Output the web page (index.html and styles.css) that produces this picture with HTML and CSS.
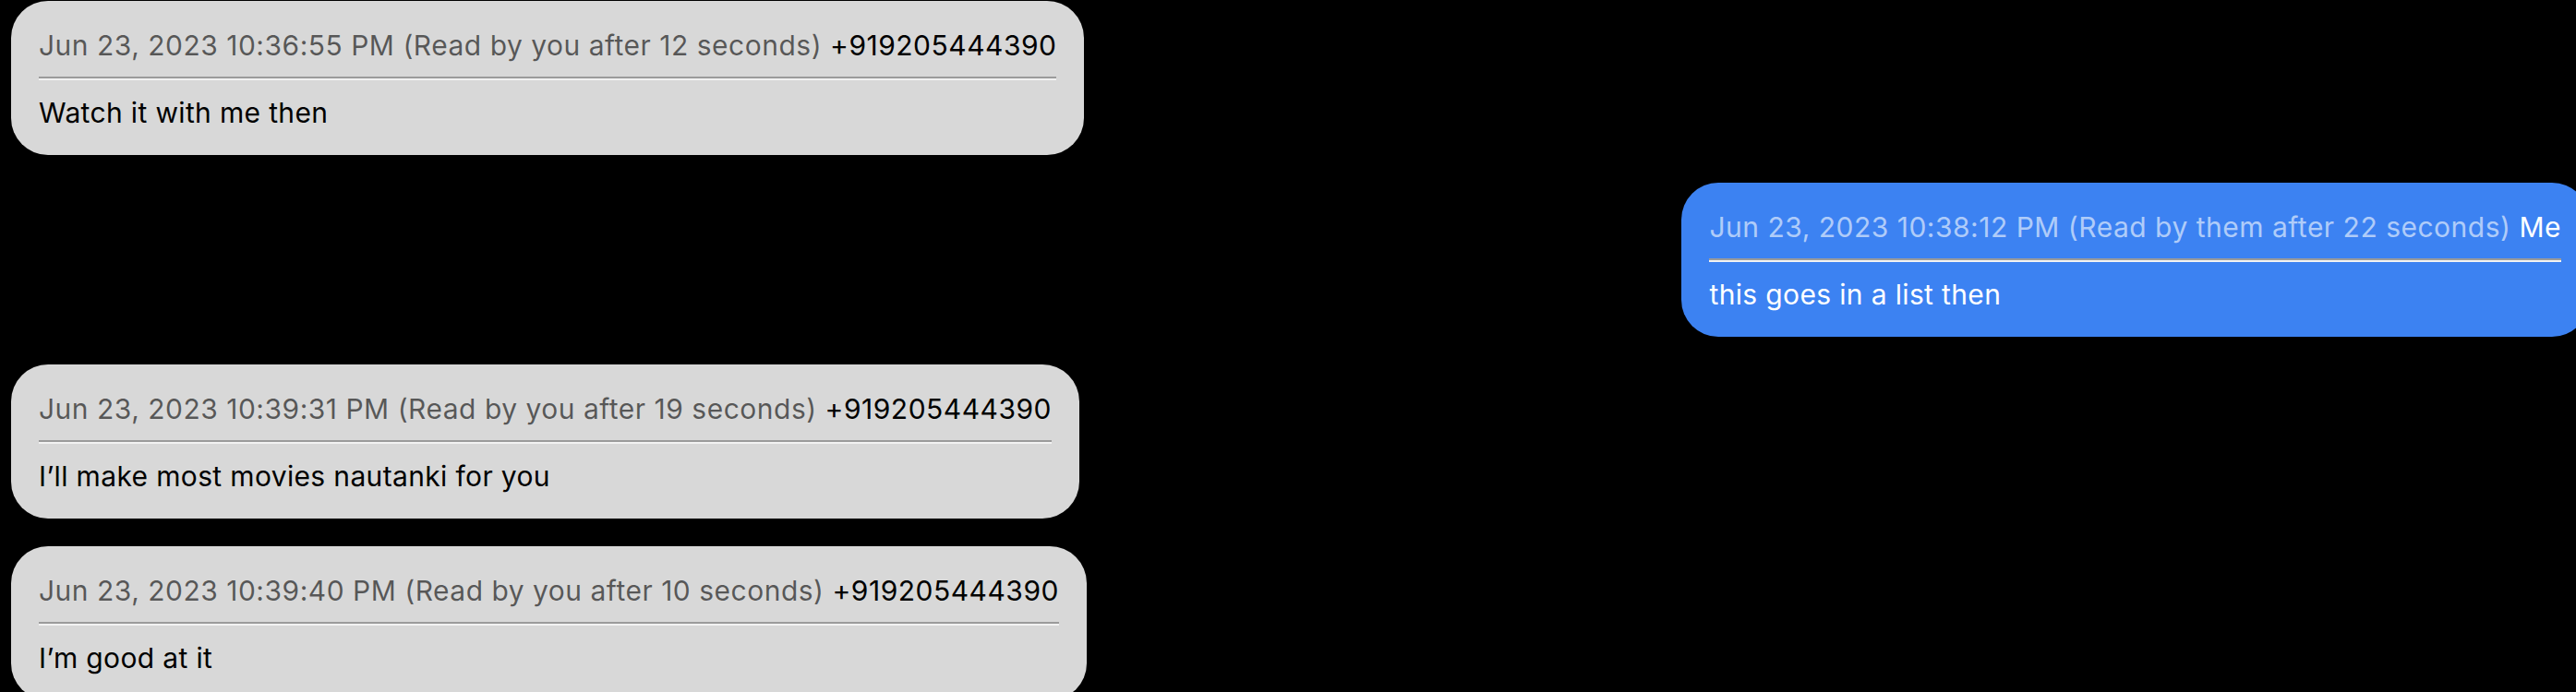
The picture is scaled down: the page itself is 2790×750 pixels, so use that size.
FILE: index.html
```html
<!DOCTYPE html>
<html lang="en">
<head>
<meta charset="utf-8">
<title>Messages</title>
<link rel="stylesheet" href="styles.css">
</head>
<body>
<main class="thread">
  <div class="msg received">
    <div class="meta"><span class="stamp">Jun 23, 2023 10:36:55 PM (Read by you after 12 seconds)</span> <span class="sender">+919205444390</span></div>
    <hr class="rule">
    <div class="text">Watch it with me then</div>
  </div>
  <div class="msg sent">
    <div class="meta"><span class="stamp">Jun 23, 2023 10:38:12 PM (Read by them after 22 seconds)</span> <span class="sender">Me</span></div>
    <hr class="rule">
    <div class="text">this goes in a list then</div>
  </div>
  <div class="msg received">
    <div class="meta"><span class="stamp">Jun 23, 2023 10:39:31 PM (Read by you after 19 seconds)</span> <span class="sender">+919205444390</span></div>
    <hr class="rule">
    <div class="text">I’ll make most movies nautanki for you</div>
  </div>
  <div class="msg received">
    <div class="meta"><span class="stamp">Jun 23, 2023 10:39:40 PM (Read by you after 10 seconds)</span> <span class="sender">+919205444390</span></div>
    <hr class="rule">
    <div class="text">I’m good at it</div>
  </div>
</main>
</body>
</html>
```

FILE: styles.css
```css
html, body {
  margin: 0;
  padding: 0;
  background: #000;
  overflow: hidden;
}

body {
  font-family: Inter, "Liberation Sans", sans-serif;
}

.thread {
  display: flex;
  flex-direction: column;
  align-items: flex-start;
  gap: 30px;
  padding: 1px 12px 0 12px;
}

.msg {
  box-sizing: border-box;
  border-radius: 40px;
  padding: 30px 30px 29px 30px;
  display: flex;
  flex-direction: column;
}

.received {
  background: #d8d8d8;
  color: #000;
}

.sent {
  align-self: flex-end;
  margin-right: -26px;
  background: #3c82f2;
  color: #fff;
}

.meta {
  font-size: 30px;
  line-height: 36px;
  letter-spacing: 0.5px;
  white-space: nowrap;
}

.received .stamp {
  color: rgba(0, 0, 0, 0.6);
}

.sent .stamp {
  color: rgba(255, 255, 255, 0.6);
}

.rule {
  margin: 16px 0 18px 0;
  height: 0;
  border: 0;
  border-top: 2px solid #9b9b9b;
  border-bottom: 2px solid #f2f2f2;
}

.text {
  font-size: 30px;
  line-height: 34px;
  letter-spacing: 0.35px;
}
```
